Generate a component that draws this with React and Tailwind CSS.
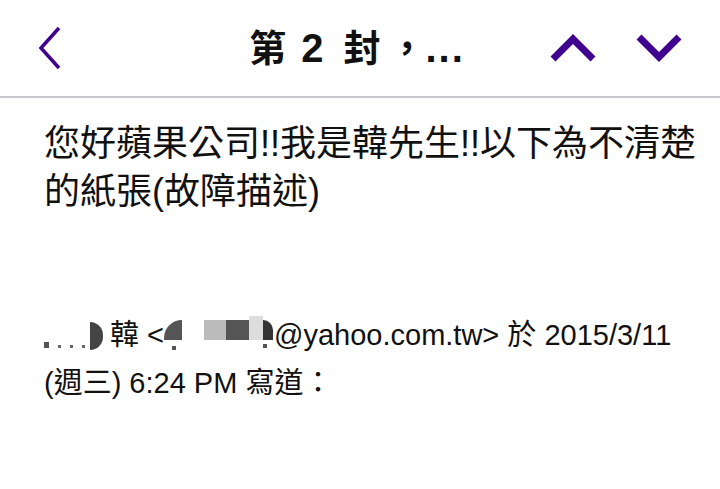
import React from "react";

const font = { fontFamily: '"Liberation Sans", "Noto Sans CJK TC", sans-serif' };

export default function App() {
  return (
    <div className="w-[720px] h-[489px] bg-white overflow-hidden text-[#111]" style={font}>
      <div className="h-[98px] flex items-center border-b-2 border-[#c8c8d2]">
        <div className="w-[100px] pl-[35px] flex items-center">
          <svg viewBox="0 0 30 44" className="w-[30px] h-[44px]" fill="none">
            <path d="M24 2 L6 22 L24 42" stroke="#400090" strokeWidth="3.5" />
          </svg>
        </div>
        <div className="flex-1 flex justify-center items-baseline font-bold text-[37px] leading-none pl-[64px]">
          <span>第</span>
          <span className="ml-[15px] text-[40px]">2</span>
          <span className="ml-[20px]">封</span>
          <span className="ml-[8px]">，</span>
          <span className="text-[40px] tracking-[2px]">...</span>
        </div>
        <div className="flex items-center gap-[40px] pr-[38px]">
          <svg viewBox="0 0 46 28" className="w-[46px] h-[28px]" fill="none">
            <path d="M3 25 L23 5 L43 25" stroke="#400090" strokeWidth="7" />
          </svg>
          <svg viewBox="0 0 46 28" className="w-[46px] h-[28px]" fill="none">
            <path d="M3 3 L23 23 L43 3" stroke="#400090" strokeWidth="7" />
          </svg>
        </div>
      </div>
      <div className="pl-[44px] pr-[10px] pt-[22px]">
        <p className="text-[36px] leading-[48px]">您好蘋果公司!!我是韓先生!!以下為不清楚的紙張(故障描述)</p>
        <div className="mt-[95px] text-[29px] leading-[48px]">
          <div className="flex items-center whitespace-nowrap">
            <span className="inline-flex items-end w-[66px] h-[30px] gap-[9px]">
              <span className="w-[5px] h-[6px] bg-[#555] mb-[2px]"></span>
              <span className="w-[3px] h-[3px] bg-[#666] mb-[2px]"></span>
              <span className="w-[3px] h-[3px] bg-[#666] mb-[2px]"></span>
              <span className="w-[3px] h-[3px] bg-[#666] mb-[2px]"></span>
              <span className="w-[13px] h-[28px] bg-[#444] rounded-r-full -ml-[4px]"></span>
            </span>
            <span>韓 &lt;</span>
            <span className="inline-flex items-start w-[110px] h-[30px]">
              <span className="flex flex-col items-end w-[18px]">
                <span className="w-[18px] h-[20px] bg-[#555] rounded-tl-full"></span>
                <span className="w-[4px] h-[4px] bg-[#555] mt-[6px] mr-[6px]"></span>
              </span>
              <span className="w-[22px] h-[20px] bg-white"></span>
              <span className="w-[22px] h-[20px] bg-[#bbb]"></span>
              <span className="w-[23px] h-[20px] bg-[#555]"></span>
              <span className="w-[14px] h-[24px] -mt-[4px] bg-[#ddd] rounded-tl-[2px]"></span>
              <span className="flex flex-col items-start">
                <span className="w-[10px] h-[20px] bg-[#333] rounded-tr-full"></span>
                <span className="w-[4px] h-[4px] bg-[#555] mt-[4px]"></span>
              </span>
            </span>
            <span>@yahoo.com.tw&gt; 於 2015/3/11</span>
          </div>
          <div>(週三) 6:24 PM 寫道：</div>
        </div>
      </div>
    </div>
  );
}
